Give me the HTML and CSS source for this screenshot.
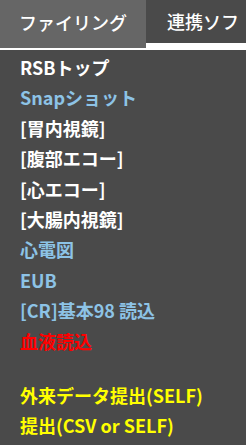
FILE: index.html
```html
<!DOCTYPE html>
<html lang="ja">
<head>
  <meta charset="UTF-8">
  <meta name="viewport" content="width=device-width, initial-scale=1.0">
  <title>ファイリング</title>
  <link rel="stylesheet" href="styles.css">
</head>
<body>
  <!-- タブ -->
  <div class="tabs">
    <div class="tab active">ファイリング</div>
    <div class="tab">連携ソフ</div>
  </div>

  <!-- メニュー -->
  <div class="menu">
    <ul class="menu-list">
      <li class="white">RSBトップ</li>
      <li class="blue">Snapショット</li>
      <li class="white">[胃内視鏡]</li>
      <li class="white">[腹部エコー]</li>
      <li class="white">[心エコー]</li>
      <li class="white">[大腸内視鏡]</li>
      <li class="blue">心電図</li>
      <li class="blue">EUB</li>
      <li class="blue">[CR]基本98 読込</li>
      <li class="red">血液読込</li>
    </ul>
    <ul class="menu-list extra">
      <li class="yellow">外来データ提出(SELF)</li>
      <li class="yellow">提出(CSV or SELF)</li>
    </ul>
  </div>
</body>
</html>
```

FILE: styles.css
```css
html, body {
  margin: 0;
  padding: 0;
  background-color: #4a4a4a;
  font-family: "Noto Sans CJK JP", "Noto Sans", sans-serif;
  overflow: hidden;
}
.tabs {
  display: flex;
  align-items: flex-start;
  background-color: #fff;
  padding-bottom: 2px;
  white-space: nowrap;
}
.tab {
  flex: 1;
  height: 43px;
  line-height: 43px;
  padding: 0 0 0 21px;
  background-color: #4a4a4a;
  color: #fff;
  font-size: 18px;
  font-weight: 500;
}
.tab.active {
  flex: none;
  width: 146px;
  box-sizing: border-box;
  height: 48px;
  line-height: 44px;
  padding: 0;
  text-align: center;
  background-color: #666;
}
.menu {
  padding: 2px 0 20px 20px;
}
.menu-list {
  list-style-type: none;
  margin: 0;
  padding: 0;
}
.menu-list li {
  font-size: 18px;
  font-weight: 700;
  line-height: 30.4px;
  white-space: nowrap;
}
.menu-list.extra {
  margin-top: 24px;
}
.menu-list.extra li {
  line-height: 30px;
}
.white { color: #fff; }
.blue { color: #8dc3e6; }
.red { color: #f00; }
.yellow { color: #ff0; }
```
